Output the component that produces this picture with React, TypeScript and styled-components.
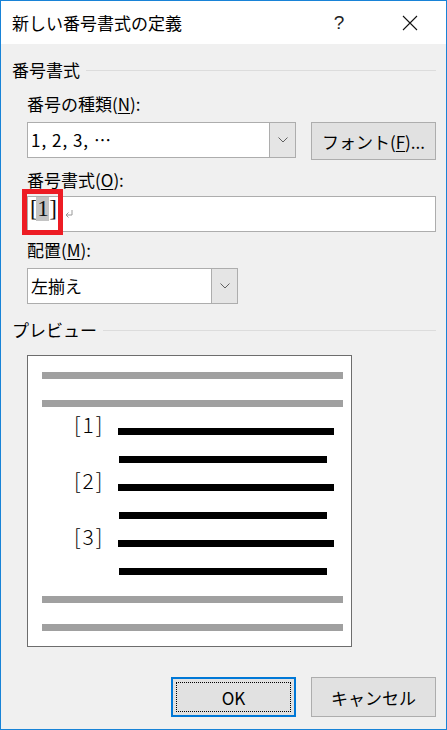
import React from 'react'
import styled, { createGlobalStyle } from 'styled-components'

const GlobalStyle = createGlobalStyle`
  html, body {
    margin: 0;
    padding: 0;
    background: #fff;
  }
  body {
    font-family: "Noto Sans CJK JP", "Noto Sans", sans-serif;
  }
`

const Window = styled.div`
  width: 447px;
  height: 730px;
  box-sizing: border-box;
  border: 1px solid #1883d7;
  display: flex;
  flex-direction: column;
  background: #f0f0f0;
  color: #000;
  font-size: 17px;
`
const TitleBar = styled.div`
  height: 43px;
  flex-shrink: 0;
  background: #fff;
  display: flex;
  align-items: center;
  padding: 0 28px 0 11px;
`
const Title = styled.span`
  flex: 1;
  line-height: 24px;
`
const HelpGlyph = styled.span`
  width: 20px;
  margin-right: 53px;
  text-align: center;
  font-family: "Liberation Sans", sans-serif;
  font-size: 19px;
  color: #222;
`
const Body = styled.div`
  flex: 1;
  display: flex;
  flex-direction: column;
  padding: 14px 10px 12px 11px;
`
const GroupHeader = styled.div<{ $top?: number }>`
  height: 24px;
  display: flex;
  align-items: center;
  margin-top: ${p => p.$top ?? 0}px;
  line-height: 24px;
`
const GroupLine = styled.div`
  flex: 1;
  height: 1px;
  background: #dcdcdc;
  margin-left: 6px;
`
const Section = styled.div`
  display: flex;
  flex-direction: column;
  padding-left: 15px;
`
const Label = styled.div<{ $top: number }>`
  line-height: 24px;
  margin-top: ${p => p.$top}px;
  u {
    text-decoration-thickness: 1px;
    text-underline-offset: 2px;
  }
`
const Row = styled.div<{ $top: number }>`
  display: flex;
  align-items: flex-start;
  gap: 15px;
  margin-top: ${p => p.$top}px;
`
const Combo = styled.div<{ $width: number; $top?: number }>`
  width: ${p => p.$width}px;
  height: 36px;
  box-sizing: border-box;
  display: flex;
  border: 1px solid #adadad;
  background: #fff;
  margin-top: ${p => p.$top ?? 0}px;
`
const ComboText = styled.div<{ $spacing?: number }>`
  flex: 1;
  padding-left: 3px;
  line-height: 34px;
  letter-spacing: ${p => p.$spacing ?? 0}px;
`
const DropButton = styled.div`
  width: 25px;
  background: #e5e5e5;
  border-left: 1px solid #adadad;
  display: flex;
  align-items: center;
  justify-content: center;
`
const PushButton = styled.button<{ $default?: boolean }>`
  width: 125px;
  height: ${p => (p.$default !== undefined ? 40 : 38)}px;
  box-sizing: border-box;
  background: #e1e1e1;
  border: ${p => (p.$default ? '2px solid #0078d7' : '1px solid #adadad')};
  font-family: inherit;
  font-size: 17px;
  color: #000;
  padding: 0;
  display: flex;
  align-items: stretch;
  justify-content: center;
  u {
    text-decoration-thickness: 1px;
    text-underline-offset: 2px;
  }
`
const ButtonFace = styled.span<{ $focus?: boolean }>`
  flex: 1;
  display: flex;
  align-items: center;
  justify-content: center;
  margin: ${p => (p.$focus ? '3px' : '0')};
  border: ${p => (p.$focus ? '1px dotted #000' : 'none')};
`
const EditField = styled.div`
  position: relative;
  margin-top: 4px;
  height: 36px;
  box-sizing: border-box;
  border: 1px solid #adadad;
  background: #fff;
  padding-left: 2px;
  display: flex;
  align-items: flex-start;
`
const FormatText = styled.span`
  font-family: "Liberation Serif", serif;
  font-weight: 400;
  font-size: 23px;
  line-height: 24px;
  letter-spacing: -1.5px;
  color: #111;
`
const Highlight = styled.span`
  display: inline-block;
  background: #c4c4c4;
  padding: 0 2px 0 1px;
`
const ReturnMark = styled.svg`
  margin: 13px 0 0 10px;
`
const RedMark = styled.div`
  position: absolute;
  left: -6px;
  top: -8px;
  width: 41px;
  height: 46px;
  box-sizing: border-box;
  border: 5px solid #ed1c24;
`
const Preview = styled.div`
  width: 325px;
  height: 292px;
  box-sizing: border-box;
  margin: 13px 0 0 15px;
  border: 1px solid #6d6d6d;
  background: #fff;
  padding: 16px 0 0 14px;
  display: flex;
  flex-direction: column;
  gap: 21px;
`
const Bar = styled.div<{ $width: number; $dark?: boolean; $indent?: number }>`
  width: ${p => p.$width}px;
  height: 7px;
  flex-shrink: 0;
  margin-left: ${p => p.$indent ?? 0}px;
  background: ${p => (p.$dark ? '#000' : '#a0a0a0')};
`
const NumRow = styled.div`
  height: 7px;
  display: flex;
  align-items: flex-end;
`
const NumLabel = styled.span`
  width: 44px;
  margin-left: 32px;
  flex-shrink: 0;
  font-size: 21px;
  font-weight: 300;
  line-height: 22px;
  letter-spacing: 2px;
  white-space: nowrap;
`
const Footer = styled.div`
  display: flex;
  justify-content: flex-end;
  gap: 15px;
  margin-top: 30px;
`

function Chevron() {
  return (
    <svg width="10" height="6" viewBox="0 0 10 6">
      <path d="M0.5 0.5 L5 5 L9.5 0.5" fill="none" stroke="#606060" strokeWidth="1" />
    </svg>
  )
}

export default function App() {
  const items = ['[1]', '[2]', '[3]']
  return (
    <>
      <GlobalStyle />
      <Window>
        <TitleBar>
          <Title>新しい番号書式の定義</Title>
          <HelpGlyph>?</HelpGlyph>
          <svg width="16" height="16" viewBox="0 0 16 16">
            <path d="M1 1 L15 15 M15 1 L1 15" stroke="#111" strokeWidth="1.1" fill="none" />
          </svg>
        </TitleBar>
        <Body>
          <GroupHeader>
            番号書式
            <GroupLine />
          </GroupHeader>
          <Section>
            <Label $top={10}>
              番号の種類(<u>N</u>):
            </Label>
            <Row $top={6}>
              <Combo $width={269}>
                <ComboText $spacing={1}>1, 2, 3, …</ComboText>
                <DropButton>
                  <Chevron />
                </DropButton>
              </Combo>
              <PushButton>
                <ButtonFace>
                  フォント(<u>F</u>)...
                </ButtonFace>
              </PushButton>
            </Row>
            <Label $top={8}>
              番号書式(<u>O</u>):
            </Label>
            <EditField>
              <FormatText>
                [<Highlight>1</Highlight>]
              </FormatText>
              <ReturnMark width="8" height="8" viewBox="0 0 8 8">
                <path d="M7 0 V5 H1 M1 5 L3.5 2.5 M1 5 L3.5 7.5" fill="none" stroke="#9a9a9a" strokeWidth="1" />
              </ReturnMark>
              <RedMark />
            </EditField>
            <Label $top={6}>
              配置(<u>M</u>):
            </Label>
            <Combo $width={211} $top={6}>
              <ComboText>左揃え</ComboText>
              <DropButton>
                <Chevron />
              </DropButton>
            </Combo>
          </Section>
          <GroupHeader $top={14}>
            プレビュー
            <GroupLine />
          </GroupHeader>
          <Preview>
            <Bar $width={301} />
            <Bar $width={301} />
            {items.map(n => (
              <React.Fragment key={n}>
                <NumRow>
                  <NumLabel>{n}</NumLabel>
                  <Bar $width={216} $dark />
                </NumRow>
                <Bar $width={208} $dark $indent={77} />
              </React.Fragment>
            ))}
            <Bar $width={301} />
            <Bar $width={301} />
          </Preview>
          <Footer>
            <PushButton $default>
              <ButtonFace $focus>OK</ButtonFace>
            </PushButton>
            <PushButton $default={false}>
              <ButtonFace>キャンセル</ButtonFace>
            </PushButton>
          </Footer>
        </Body>
      </Window>
    </>
  )
}
